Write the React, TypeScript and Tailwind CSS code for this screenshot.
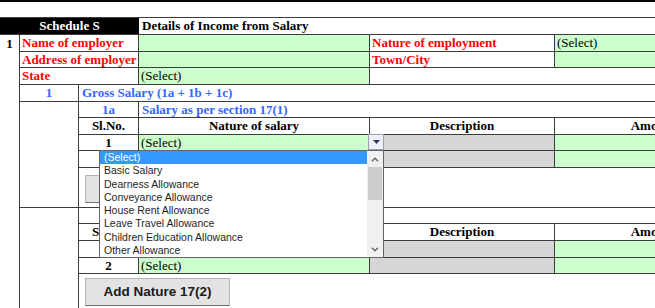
import React from 'react';

const line = 'border-[#3c3c3c]';
const green = 'bg-[#ccffcc]';
const gray = 'bg-[#d6d6d6]';

function Cell({ w, className = '', children }: { w: string; className?: string; children?: React.ReactNode }) {
  return <div className={`${w} shrink-0 h-full border-r ${line} flex items-center overflow-hidden whitespace-nowrap ${className}`}>{children}</div>;
}

function HeaderRow({ h }: { h: string }) {
  return (
    <div className={`${h} flex border-b ${line} font-bold text-black`}>
      <Cell w="w-[60px]" className="justify-center">Sl.No.</Cell>
      <Cell w="w-[231px]" className="justify-center">Nature of salary</Cell>
      <Cell w="w-[185px]" className="justify-center">Description</Cell>
      <Cell w="w-[198px]" className="justify-center">Amount</Cell>
    </div>
  );
}

function SalaryRow({ h, no }: { h: string; no: string }) {
  return (
    <div className={`${h} flex border-b ${line}`}>
      <Cell w="w-[60px]" className="justify-center font-bold">{no}</Cell>
      <Cell w="w-[231px]" className={`${green} pl-[2px]`}>(Select)</Cell>
      <Cell w="w-[185px]" className={gray} />
      <Cell w="w-[198px]" className={green} />
    </div>
  );
}

function AddButton({ label }: { label: string }) {
  return (
    <button className="ml-[6px] w-[145px] h-[28px] shrink-0 bg-[#e3e3e3] border border-[#b4b4b4] border-b-[#6e6e6e] font-['Liberation_Sans',Arial,sans-serif] font-bold text-[13.5px] text-[#1a1a1a] flex items-center justify-center">
      {label}
    </button>
  );
}

const options = [
  '(Select)',
  'Basic Salary',
  'Dearness Allowance',
  'Conveyance Allowance',
  'House Rent Allowance',
  'Leave Travel Allowance',
  'Children Education Allowance',
  'Other Allowance',
];

export default function App() {
  return (
    <div className="relative w-[655px] h-[308px] overflow-hidden bg-white font-['Liberation_Serif','Times_New_Roman',serif] text-[13px] leading-[16px] text-black">
      <div className="h-[2px] bg-black" />
      <div className="h-[15px]" />

      <div className={`border-t ${line}`}>
        {/* Schedule header */}
        <div className={`h-[17px] flex border-b ${line}`}>
          <div className="w-[139px] shrink-0 bg-black text-white font-bold flex items-center justify-center">Schedule S</div>
          <div className="flex-1 flex items-center pl-[3px] font-bold">Details of Income from Salary</div>
        </div>

        <div className="flex">
          {/* column A */}
          <div className={`w-[20px] shrink-0 border-r ${line} h-[300px]`}>
            <div className="h-[17px] flex items-center justify-center font-bold">1</div>
          </div>

          <div className="flex-1 flex flex-col">
            <div className={`h-[17px] flex border-b ${line}`}>
              <Cell w="w-[119px]" className="pl-[2px] font-bold text-[#ff0000]">Name of employer</Cell>
              <Cell w="w-[231px]" className={green} />
              <Cell w="w-[185px]" className="pl-[2px] font-bold text-[#ff0000]">Nature of employment</Cell>
              <div className={`flex-1 ${green} flex items-center pl-[2px]`}>(Select)</div>
            </div>
            <div className={`h-[16px] flex border-b ${line}`}>
              <Cell w="w-[119px]" className="pl-[2px] font-bold text-[#ff0000]">Address of employer</Cell>
              <Cell w="w-[231px]" className={green} />
              <Cell w="w-[185px]" className="pl-[2px] font-bold text-[#ff0000]">Town/City</Cell>
              <div className={`flex-1 ${green}`} />
            </div>
            <div className={`h-[17px] flex border-b ${line}`}>
              <Cell w="w-[119px]" className="pl-[2px] font-bold text-[#ff0000]">State</Cell>
              <Cell w="w-[231px]" className={`${green} pl-[2px]`}>(Select)</Cell>
              <div className="flex-1" />
            </div>

            <div className="flex">
              {/* column B */}
              <div className={`w-[59px] shrink-0 border-r ${line} flex flex-col h-[240px]`}>
                <div className={`h-[17px] border-b ${line} flex items-center justify-center font-bold text-[#3366ff]`}>1</div>
                <div className={`h-[106px] border-b ${line}`} />
              </div>

              <div className="flex-1 flex flex-col min-w-0">
                <div className={`h-[17px] flex items-center border-b ${line} pl-[3px] font-bold text-[#3366ff] whitespace-nowrap`}>
                  Gross Salary (1a + 1b + 1c)
                </div>
                <div className={`h-[16px] flex border-b ${line} font-bold text-[#3366ff]`}>
                  <Cell w="w-[60px]" className="justify-center">1a</Cell>
                  <div className="flex-1 flex items-center pl-[3px] whitespace-nowrap">Salary as per section 17(1)</div>
                </div>
                <HeaderRow h="h-[17px]" />
                <SalaryRow h="h-[16px]" no="1" />
                <SalaryRow h="h-[17px]" no="2" />
                <div className={`h-[40px] border-b ${line} pt-[7px]`}>
                  <AddButton label="Add Nature 17(1)" />
                </div>

                <div className={`h-[16px] flex border-b ${line} font-bold text-[#3366ff]`}>
                  <Cell w="w-[60px]" className="justify-center">1b</Cell>
                  <div className="flex-1 flex items-center pl-[3px] whitespace-nowrap">Perquisites</div>
                </div>
                <HeaderRow h="h-[17px]" />
                <SalaryRow h="h-[17px]" no="1" />
                <SalaryRow h="h-[16px]" no="2" />
                <div className="pt-[4px]">
                  <AddButton label="Add Nature 17(2)" />
                </div>
              </div>
            </div>
          </div>
        </div>
      </div>

      {/* in-cell dropdown arrow */}
      <div className="absolute left-[368px] top-[134px] w-[16px] h-[16px] border border-[#9aa0b4] bg-[#eef0f5] flex items-center justify-center">
        <svg width="7" height="4" viewBox="0 0 7 4">
          <path d="M0 0h7L3.5 4z" fill="#2b3a66" />
        </svg>
      </div>

      {/* open dropdown list */}
      <div className="absolute left-[99px] top-[150px] w-[285px] h-[108px] border border-[#646464] bg-white flex font-['Liberation_Sans',Arial,sans-serif] text-[10.5px] leading-[13px] text-[#1e1e1e]">
        <div className="flex-1 flex flex-col">
          {options.map((o, i) => (
            <div
              key={o}
              className={`h-[13.25px] pl-[4px] flex items-center whitespace-nowrap ${i === 0 ? 'bg-[#3399ff] text-white' : ''}`}
            >
              {o}
            </div>
          ))}
        </div>
        <div className="w-[16px] shrink-0 bg-[#f0f0f0] flex flex-col items-center">
          <div className="h-[16px] flex items-center justify-center">
            <svg width="8" height="5" viewBox="0 0 8 5">
              <path d="M1 4.2L4 1.2L7 4.2" fill="none" stroke="#606060" strokeWidth="1.3" />
            </svg>
          </div>
          <div className="w-[14px] h-[33px] bg-[#cdcdcd]" />
          <div className="flex-1" />
          <div className="h-[16px] flex items-center justify-center">
            <svg width="8" height="5" viewBox="0 0 8 5">
              <path d="M1 0.8L4 3.8L7 0.8" fill="none" stroke="#606060" strokeWidth="1.3" />
            </svg>
          </div>
        </div>
      </div>
    </div>
  );
}
